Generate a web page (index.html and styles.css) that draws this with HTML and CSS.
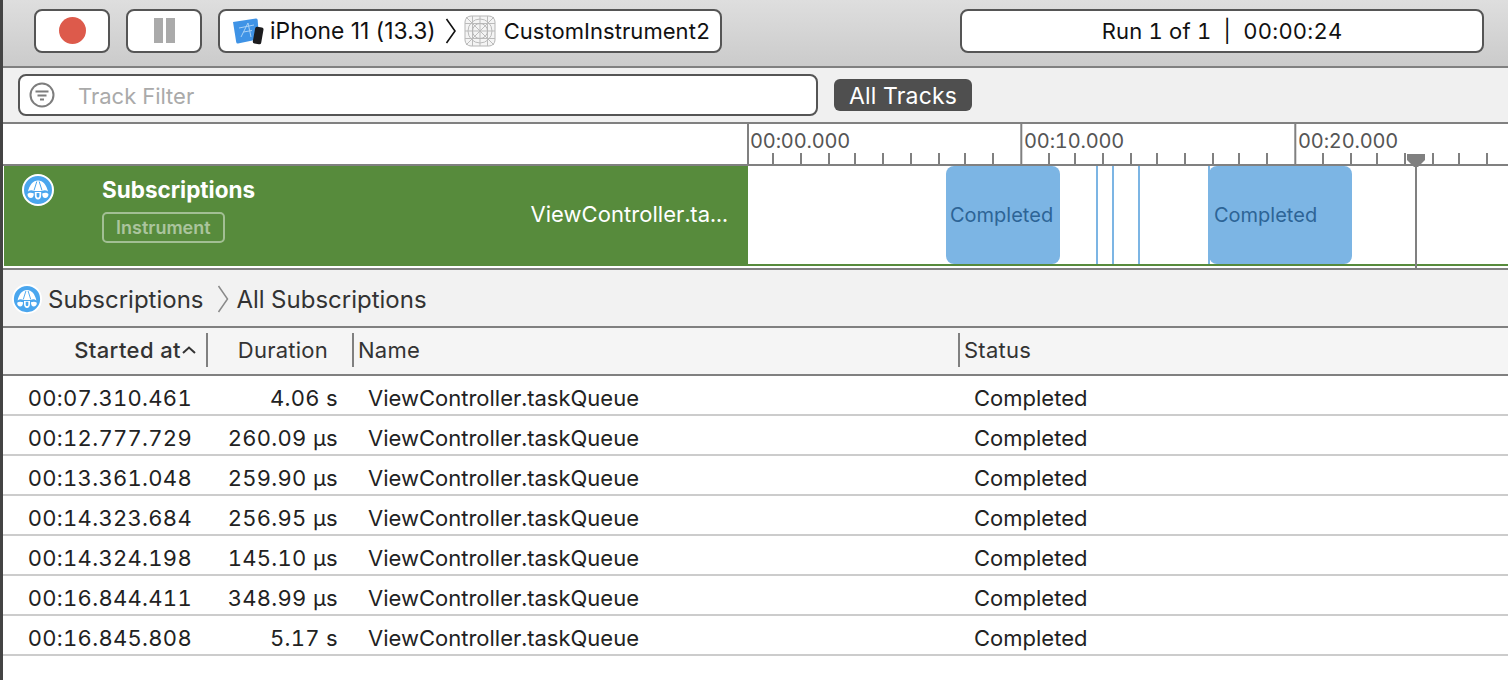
FILE: index.html
```html
<!DOCTYPE html>
<html lang="en">
<head>
  <meta charset="UTF-8" />
  <meta name="viewport" content="width=device-width, initial-scale=1" />
  <title>Instruments - CustomInstrument2</title>
  <link rel="stylesheet" href="styles.css">
</head>
<body>
  <div class="window">
    <div class="toolbar">
      <button class="tool-btn"><span class="record-dot"></span></button>
      <button class="tool-btn"><span class="pause-bar"></span><span class="pause-bar"></span></button>
      <div class="scheme">
        <svg class="device-icon" width="32" height="28" viewBox="0 0 32 28">
          <path d="M1 5 L24 1.500 Q25.500 1.300 25.700 3 L27 22 L6 26.500 Q4.500 26.800 4.200 25 Z" fill="#3f93e6"/>
          <path d="M9 20 L16 6 L19 20 M11.500 15 L20 13.500 M7 11 L22 8" fill="none" stroke="#a9d2f7" stroke-width="1"/>
          <rect x="22" y="10" width="8.500" height="17" rx="2" transform="rotate(10 26 18)" fill="#1c1c1e"/>
        </svg>
        <span class="scheme-device">iPhone 11 (13.3)</span>
        <svg class="scheme-chevron" width="12" height="26" viewBox="0 0 12 26"><path d="M1.500 1 L10 13 L1.500 25" fill="none" stroke="#111" stroke-width="1.600"/></svg>
        <svg class="scheme-icon" width="32" height="32" viewBox="0 0 32 32">
          <rect x="1" y="1" width="30" height="30" rx="6" fill="#f4f4f4" stroke="#b5b5b5"/>
          <path d="M1 8.500H31M1 16H31M1 23.500H31M8.500 1V31M16 1V31M23.500 1V31M2 2L30 30M30 2L2 30" fill="none" stroke="#bbb"/>
          <circle cx="16" cy="16" r="7.500" fill="none" stroke="#b5b5b5"/>
          <circle cx="16" cy="16" r="12" fill="none" stroke="#bbb"/>
        </svg>
        <span>CustomInstrument2</span>
      </div>
      <div class="run-info">Run 1 of 1&nbsp; |&nbsp; 00:00:24</div>
    </div>

    <div class="filter-bar">
      <div class="filter-field">
        <svg width="26" height="26" viewBox="0 0 26 26">
          <circle cx="13" cy="13" r="11.500" fill="#fff" stroke="#7d7d7d" stroke-width="2"/>
          <path d="M6.500 9.500H19.500M8.500 13.500H17.500M11 17.500H15" stroke="#7d7d7d" stroke-width="2"/>
        </svg>
        <span class="filter-placeholder">Track Filter</span>
      </div>
      <span class="all-tracks">All Tracks</span>
    </div>

    <div class="ruler">
      <div class="ruler-side"></div>
      <div class="ruler-scale">
        <svg class="ruler-ticks" width="760" height="40" viewBox="0 0 760 40">
          <path d="M1 0V40M274.300 0V40M548.300 0V40" stroke="#808080" stroke-width="2"/>
          <path d="M26 29V40M54 29V40M82 29V40M108 29V40M136 29V40M164 29V40M192 29V40M218 29V40M246 29V40M302 29V40M328 29V40M356 29V40M384 29V40M410 29V40M438 29V40M466 29V40M492 29V40M520 29V40M576 29V40M604 29V40M630 29V40M658 29V40M686 29V40M712 29V40M740 29V40" stroke="#808080" stroke-width="2"/>
        </svg>
        <span class="ruler-label label-0">00:00.000</span>
        <span class="ruler-label label-10">00:10.000</span>
        <span class="ruler-label label-20">00:20.000</span>
      </div>
    </div>

    <div class="track">
      <div class="track-head">
        <svg class="sub-icon" width="32" height="32" viewBox="0 0 32 32"><use href="#sub-glyph"/></svg>
        <div class="track-title">
          <div class="track-name">Subscriptions</div>
          <span class="track-badge">Instrument</span>
        </div>
        <div class="track-value">ViewController.ta...</div>
      </div>
      <div class="track-lane">
        <div class="event event-a">Completed</div>
        <div class="tick-event tick-a"></div>
        <div class="tick-event tick-b"></div>
        <div class="tick-event tick-c"></div>
        <div class="tick-event tick-d"></div>
        <div class="event event-b">Completed</div>
        <svg class="playhead" width="20" height="116" viewBox="0 0 20 116">
          <path d="M1 0H19V6L12 13H8L1 6Z" fill="#808080"/>
          <rect x="9" y="10" width="2" height="106" fill="#808080"/>
        </svg>
      </div>
    </div>

    <div class="breadcrumb">
      <svg width="30" height="30" viewBox="0 0 32 32"><use href="#sub-glyph"/></svg>
      <span class="crumb-first">Subscriptions</span>
      <svg class="crumb-chevron" width="12" height="28" viewBox="0 0 12 28"><path d="M1.500 1 L10.500 14 L1.500 27" fill="none" stroke="#8a8a8a" stroke-width="1.500"/></svg>
      <span>All Subscriptions</span>
    </div>

    <div class="table-head">
      <div class="th th-started"><strong>Started at</strong><svg width="14" height="8" viewBox="0 0 14 8"><path d="M1 7L7 1.500L13 7" fill="none" stroke="#333" stroke-width="2"/></svg></div>
      <div class="th th-duration">Duration</div>
      <div class="th th-name">Name</div>
      <div class="th th-status">Status</div>
    </div>

    <div class="row"><span class="cell-started">00:07.310.461</span><span class="cell-duration">4.06 s</span><span class="cell-name">ViewController.taskQueue</span><span class="cell-status">Completed</span></div>
    <div class="row"><span class="cell-started">00:12.777.729</span><span class="cell-duration">260.09 µs</span><span class="cell-name">ViewController.taskQueue</span><span class="cell-status">Completed</span></div>
    <div class="row"><span class="cell-started">00:13.361.048</span><span class="cell-duration">259.90 µs</span><span class="cell-name">ViewController.taskQueue</span><span class="cell-status">Completed</span></div>
    <div class="row"><span class="cell-started">00:14.323.684</span><span class="cell-duration">256.95 µs</span><span class="cell-name">ViewController.taskQueue</span><span class="cell-status">Completed</span></div>
    <div class="row"><span class="cell-started">00:14.324.198</span><span class="cell-duration">145.10 µs</span><span class="cell-name">ViewController.taskQueue</span><span class="cell-status">Completed</span></div>
    <div class="row"><span class="cell-started">00:16.844.411</span><span class="cell-duration">348.99 µs</span><span class="cell-name">ViewController.taskQueue</span><span class="cell-status">Completed</span></div>
    <div class="row"><span class="cell-started">00:16.845.808</span><span class="cell-duration">5.17 s</span><span class="cell-name">ViewController.taskQueue</span><span class="cell-status">Completed</span></div>
  </div>

  <svg class="defs" width="0" height="0">
    <symbol id="sub-glyph" viewBox="0 0 32 32">
      <circle cx="16" cy="16" r="15" fill="#4aa6ee" stroke="#fff" stroke-width="2"/>
      <path d="M16 6.500C11 6.500 7.500 11 6 17.500C8 16 10 16 12 17H20C22 16 24 16 26 17.500C24.500 11 21 6.500 16 6.500Z" fill="#fff"/>
      <path d="M5.500 20C5.500 22.800 7 24 8.800 24C10.600 24 11.800 22.500 11.800 19.500C9.500 18.500 7 18.500 5.500 20ZM26.500 20C26.500 22.800 25 24 23.200 24C21.400 24 20.200 22.500 20.200 19.500C22.500 18.500 25 18.500 26.500 20Z" fill="#fff"/>
      <path d="M12.800 18H19.200V21C19.200 23.800 18 25.500 16 25.500C14 25.500 12.800 23.800 12.800 21Z" fill="#fff"/>
      <path d="M14.600 19H17.400V21.500C17.400 23 17 23.500 16 23.500C15 23.500 14.600 23 14.600 21.500Z" fill="#4aa6ee"/>
      <path d="M12 16.500L14.800 7.500M20 16.500L17.200 7.500" stroke="#4aa6ee" stroke-width="1"/>
    </symbol>
  </svg>
</body>
</html>
```

FILE: styles.css
```css
* {
  box-sizing: border-box;
}

html, body {
  height: 100%;
}

body {
  margin: 0;
  overflow: hidden;
  background: #fff;
  font-family: "Inter", "Liberation Sans", sans-serif;
  font-size: 22px;
  font-variant-numeric: tabular-nums;
  color: #222;
}

.window {
  height: 100%;
  border-left: 3px solid #444;
}

.defs {
  position: absolute;
}

/* toolbar */
.toolbar {
  display: flex;
  align-items: center;
  height: 68px;
  padding: 0 24px 5px 31px;
  background: linear-gradient(to bottom, #dedede, #cbcbcb);
  border-bottom: 2px solid #808080;
}

.tool-btn {
  display: flex;
  align-items: center;
  justify-content: center;
  gap: 3px;
  width: 76px;
  height: 44px;
  margin-right: 16px;
  padding: 0;
  background: #fff;
  border: 2px solid #555;
  border-radius: 8px;
}

.record-dot {
  width: 27px;
  height: 27px;
  border-radius: 50%;
  background: #dd5a4b;
}

.pause-bar {
  width: 9px;
  height: 25px;
  background: #aaa;
}

.scheme {
  display: flex;
  align-items: center;
  height: 44px;
  width: 504px;
  padding-left: 12px;
  background: #fff;
  border: 2px solid #555;
  border-radius: 8px;
  white-space: nowrap;
  letter-spacing: 0.05px;
  color: #111;
}

.device-icon {
  flex: none;
  margin-right: 6px;
}

.scheme-device {
  font-size: 22.800px;
  font-variant-numeric: normal;
}

.scheme-icon {
  flex: none;
  margin-right: 8px;
}

.scheme-chevron {
  flex: none;
  margin: 0 7px 0 9px;
}

.run-info {
  margin-left: auto;
  width: 524px;
  height: 44px;
  line-height: 40px;
  text-align: center;
  background: #fff;
  border: 2px solid #555;
  border-radius: 8px;
  letter-spacing: 0.2px;
  color: #111;
}

/* track filter */
.filter-bar {
  display: flex;
  align-items: center;
  height: 56px;
  padding-left: 15px;
  background: #f0f0f0;
  border-bottom: 2px solid #808080;
}

.filter-field {
  display: flex;
  align-items: center;
  width: 800px;
  height: 42px;
  padding-left: 9px;
  background: #fff;
  border: 2px solid #555;
  border-radius: 8px;
}

.filter-placeholder {
  margin: 2px 0 0 23px;
  color: #aaa;
}

.all-tracks {
  margin-left: 16px;
  padding: 0 15px;
  height: 32px;
  line-height: 34px;
  background: #4f4f4f;
  border-radius: 6px;
  font-size: 23px;
  letter-spacing: 0.2px;
  color: #fff;
}

/* ruler */
.ruler {
  display: flex;
  height: 42px;
  border-bottom: 2px solid #808080;
}

.ruler-side {
  width: 744px;
}

.ruler-scale {
  position: relative;
  flex: 1;
}

.ruler-ticks {
  display: block;
}

.ruler-label {
  position: absolute;
  top: 5px;
  font-size: 20px;
  letter-spacing: -0.15px;
  color: #555;
}

.label-0 {
  left: 3px;
}

.label-10 {
  left: 277px;
}

.label-20 {
  left: 551px;
}

/* track */
.track {
  display: flex;
  height: 104px;
  border-bottom: 2px solid #808080;
}

.track-head {
  display: flex;
  width: 744px;
  height: 100px;
  margin-left: 1px;
  background: #578b3c;
  color: #fff;
}

.sub-icon {
  flex: none;
  margin: 8px 0 0 18px;
}

.track-title {
  margin: 10px 0 0 48px;
}

.track-name {
  font-size: 22.500px;
  font-weight: 700;
}

.track-badge {
  display: inline-block;
  margin-top: 9px;
  padding: 0 12px;
  height: 31px;
  line-height: 28px;
  border: 2px solid rgba(255, 255, 255, 0.45);
  border-radius: 5px;
  font-size: 18px;
  font-weight: 600;
  color: rgba(255, 255, 255, 0.5);
}

.track-value {
  margin: 35px 0 0 auto;
  padding-right: 20px;
  letter-spacing: 0.05px;
  white-space: nowrap;
}

.track-lane {
  position: relative;
  flex: 1;
  height: 100px;
  border-bottom: 2px solid #578b3c;
}

.event {
  position: absolute;
  top: 0;
  height: 98px;
  line-height: 99px;
  padding-left: 4px;
  background: #7cb5e4;
  border-radius: 8px;
  font-size: 20px;
  color: #2d6496;
}

.event-a {
  left: 198px;
  width: 114px;
}

.event-b {
  left: 461px;
  width: 143px;
  padding-left: 5px;
}

.tick-event {
  position: absolute;
  top: 0;
  width: 2px;
  height: 98px;
  background: #7cb5e4;
}

.tick-a {
  left: 348px;
}

.tick-b {
  left: 364px;
}

.tick-c {
  left: 390px;
}

.tick-d {
  left: 460px;
}

.playhead {
  position: absolute;
  left: 658px;
  top: -12px;
}

/* breadcrumb */
.breadcrumb {
  display: flex;
  align-items: center;
  height: 58px;
  padding: 2px 0 0 9px;
  background: #f2f2f2;
  border-bottom: 2px solid #808080;
  font-size: 24px;
  color: #333;
}

.crumb-first {
  margin-left: 6px;
}

.crumb-chevron {
  margin: 0 7px 0 14px;
}

/* table */
.table-head {
  display: grid;
  grid-template-columns: 205px 146px 606px 1fr;
  align-items: center;
  height: 48px;
  padding-bottom: 2px;
  background: #f5f5f5;
  border-bottom: 2px solid #808080;
  letter-spacing: 0.25px;
  color: #333;
}

.th {
  display: flex;
  align-items: center;
  height: 34px;
  border-right: 2px solid #808080;
}

.th strong {
  font-weight: 500;
  letter-spacing: 0.4px;
}

.th-started {
  justify-content: flex-end;
  padding-right: 10px;
  gap: 1px;
}

.th-duration {
  justify-content: flex-end;
  padding-right: 24px;
}

.th-name, .th-status {
  padding-left: 4px;
}

.th-status {
  border-right: none;
}

.row {
  display: grid;
  grid-template-columns: 189px 146px 606px 1fr;
  align-items: center;
  height: 40px;
  padding-top: 6px;
  border-bottom: 2px solid #ccc;
}

.cell-started, .cell-duration {
  text-align: right;
  letter-spacing: 0.3px;
}

.cell-name {
  padding-left: 30px;
}

.cell-status {
  padding-left: 30px;
}
```
